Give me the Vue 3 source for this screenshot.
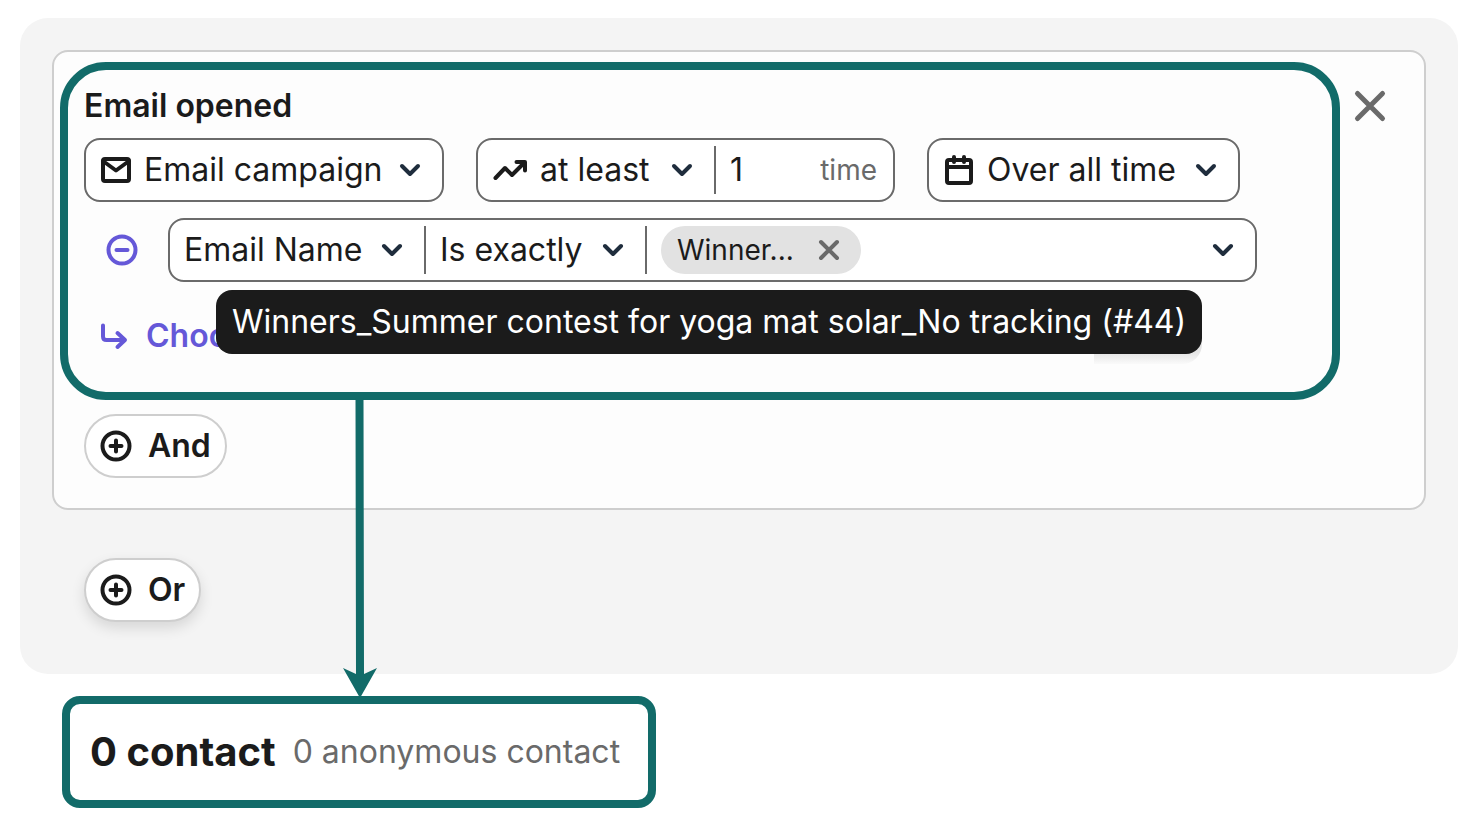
<script setup>
import { ref } from 'vue'

const source = ref('Email campaign')
const operator = ref('at least')
const count = ref('1')
const period = ref('Over all time')
const field = ref('Email Name')
const match = ref('Is exactly')
</script>

<template>
  <main class="page">
    <section class="panel">
      <div class="card">
        <div class="card-top">
          <div class="condition">
            <h2 class="title">Email opened</h2>

            <div class="row">
              <label class="box source">
                <svg class="icon" viewBox="0 0 32 32" aria-hidden="true">
                  <rect x="3" y="5" width="26" height="22" rx="2" />
                  <path d="M3 7l13 9.500 13-9.500" />
                </svg>
                <span class="picker">
                  <select v-model="source" aria-label="Source"><option>Email campaign</option></select>
                  <svg class="chevron" viewBox="0 0 20 20" aria-hidden="true"><path d="M2 6l8 8 8-8" /></svg>
                </span>
              </label>

              <div class="box frequency">
                <label class="operator">
                  <svg class="icon wide" viewBox="0 0 36 32" aria-hidden="true">
                    <path d="M3.500 24l9.500-10 7 7L32.500 8.500M24.500 8h8.500v8.500" />
                  </svg>
                  <span class="picker">
                    <select v-model="operator" aria-label="Operator"><option>at least</option></select>
                    <svg class="chevron" viewBox="0 0 20 20" aria-hidden="true"><path d="M2 6l8 8 8-8" /></svg>
                  </span>
                </label>
                <label class="count">
                  <input v-model="count" type="text" inputmode="numeric" />
                  <span class="unit">time</span>
                </label>
              </div>

              <label class="box period">
                <svg class="icon" viewBox="0 0 32 32" aria-hidden="true">
                  <rect x="4" y="6" width="24" height="23" rx="2" />
                  <path d="M4 13h24" />
                  <path d="M11 3v5M21 3v5" />
                </svg>
                <span class="picker">
                  <select v-model="period" aria-label="Period"><option>Over all time</option></select>
                  <svg class="chevron" viewBox="0 0 20 20" aria-hidden="true"><path d="M2 6l8 8 8-8" /></svg>
                </span>
              </label>
            </div>

            <div class="row filter-row">
              <button class="icon-button remove" type="button" aria-label="Remove filter">
                <svg class="icon" viewBox="0 0 32 32" aria-hidden="true">
                  <circle cx="16" cy="16" r="13.500" />
                  <path d="M10.500 16h11" />
                </svg>
              </button>
              <div class="box filter">
                <label class="picker field">
                  <select v-model="field" aria-label="Field"><option>Email Name</option></select>
                  <svg class="chevron" viewBox="0 0 20 20" aria-hidden="true"><path d="M2 6l8 8 8-8" /></svg>
                </label>
                <label class="picker match">
                  <select v-model="match" aria-label="Match type"><option>Is exactly</option></select>
                  <svg class="chevron" viewBox="0 0 20 20" aria-hidden="true"><path d="M2 6l8 8 8-8" /></svg>
                </label>
                <div class="values">
                  <span class="chip" aria-describedby="value-tip">
                    Winner...
                    <button class="icon-button" type="button" aria-label="Remove value">
                      <svg class="cross" viewBox="0 0 24 24" aria-hidden="true"><path d="M4 4l16 16M20 4L4 20" /></svg>
                    </button>
                  </span>
                  <button class="icon-button" type="button" aria-label="Show values">
                    <svg class="chevron" viewBox="0 0 20 20" aria-hidden="true"><path d="M2 6l8 8 8-8" /></svg>
                  </button>
                </div>
                <div id="value-tip" class="tooltip" role="tooltip">
                  Winners_Summer contest for yoga mat solar_No tracking (#44)
                </div>
              </div>
            </div>

            <button class="choose" type="button">
              <svg class="icon" viewBox="0 0 32 32" aria-hidden="true">
                <path d="M5 5.500v11q0 3.500 3.500 3.500h18M19.500 13l7.500 7-7.500 7" />
              </svg>
              Choo
            </button>
          </div>

          <button class="icon-button close" type="button" aria-label="Remove condition">
            <svg viewBox="0 0 32 32" aria-hidden="true"><path d="M3.500 3.500l25 25M28.500 3.500l-25 25" /></svg>
          </button>
        </div>

        <button class="pill" type="button">
          <svg class="icon" viewBox="0 0 32 32" aria-hidden="true">
            <circle cx="16" cy="16" r="13.500" />
            <path d="M10.500 16h11M16 10.500v11" />
          </svg>
          And
        </button>
      </div>

      <button class="pill raised" type="button">
        <svg class="icon" viewBox="0 0 32 32" aria-hidden="true">
          <circle cx="16" cy="16" r="13.500" />
          <path d="M10.500 16h11M16 10.500v11" />
        </svg>
        Or
      </button>
    </section>

    <section class="result">
      <svg class="arrow" viewBox="0 0 34 300" aria-hidden="true">
        <path d="M12.500 0h8L21 276l13-6-17 30L0 270l13 6z" />
      </svg>
      <strong>0 contact</strong>
      <span>0 anonymous contact</span>
    </section>
  </main>
</template>

<style>
body {
  margin: 0;
  background: #fff;
}
</style>

<style scoped>
.page {
  padding: 18px 16px 18px 20px;
  font-family: Inter, "Liberation Sans", sans-serif;
  font-size: 32px;
  line-height: 40px;
  color: #1b1b1b;
}

.page *,
.page *::after {
  box-sizing: border-box;
}

.panel {
  padding: 32px 32px 52px;
  border-radius: 28px;
  background: #f4f4f4;
}

.card {
  padding: 10px 38px 30px 6px;
  border: 2px solid #cecece;
  border-radius: 16px;
  background: #fdfdfd;
}

.card-top {
  display: flex;
  align-items: flex-start;
  gap: 14px;
}

.condition {
  flex: 1;
  min-width: 0;
  padding: 16px 16px 36px;
  border: 8px solid #126b69;
  border-radius: 46px;
}

.title {
  margin: 0 0 12px;
  font-size: 32px;
  line-height: 40px;
  font-weight: 600;
}

.row {
  display: flex;
  align-items: center;
  gap: 32px;
}

.filter-row {
  gap: 30px;
  margin-top: 16px;
  padding-left: 22px;
}

.box {
  display: flex;
  align-items: center;
  height: 64px;
  border: 2px solid #6a6a6a;
  border-radius: 16px;
  background: #fff;
}

.source,
.period {
  gap: 12px;
  padding: 0 22px 0 14px;
}

.source { width: 360px; }
.frequency { width: 419px; }
.period { width: 313px; }

.operator {
  display: flex;
  align-items: center;
  gap: 12px;
  width: 238px;
  height: 48px;
  padding: 0 22px 0 14px;
  border-right: 2px solid #6a6a6a;
}

.picker {
  display: grid;
  flex: 1;
  align-items: center;
  min-width: 0;
}

.picker > * {
  grid-area: 1 / 1;
}

.picker > .chevron {
  justify-self: end;
  pointer-events: none;
}

select,
input,
button {
  margin: 0;
  padding: 0;
  border: 0;
  outline: 0;
  background: none;
  color: inherit;
  font: inherit;
}

select {
  appearance: none;
  width: 100%;
  height: 48px;
}

svg {
  flex: none;
  display: block;
  overflow: visible;
  fill: none;
  stroke: currentColor;
  stroke-width: 4;
  stroke-linecap: round;
  stroke-linejoin: round;
}

.icon {
  width: 32px;
  height: 32px;
}

.wide {
  width: 36px;
}

.chevron {
  width: 20px;
  height: 20px;
  color: #1f2d3d;
}

.count {
  display: flex;
  flex: 1;
  align-items: center;
  min-width: 0;
  padding: 0 16px 0 14px;
}

.count input {
  flex: 1;
  width: 0;
  min-width: 0;
}

.unit {
  font-size: 28px;
  color: #6a6a6a;
}

.filter {
  position: relative;
  z-index: 1;
  flex: 1;
  max-width: 1089px;
}

.remove {
  color: #6558d8;
}

.field,
.match {
  flex: none;
  height: 48px;
  padding: 0 22px 0 14px;
  border-right: 2px solid #6a6a6a;
}

.field { width: 256px; }
.match { width: 221px; }

.values {
  display: flex;
  flex: 1;
  align-items: center;
  justify-content: space-between;
  padding: 0 22px 0 14px;
}

.chip {
  display: flex;
  align-items: center;
  justify-content: space-between;
  width: 200px;
  height: 48px;
  padding: 0 20px 0 16px;
  border-radius: 24px;
  background: #e2e2e2;
  font-size: 28px;
}

.icon-button {
  flex: none;
  cursor: pointer;
}

.cross {
  width: 24px;
  height: 24px;
  color: #6a6a6a;
}

.tooltip {
  position: absolute;
  top: 70px;
  left: 46px;
  height: 64px;
  padding: 12px 16px;
  border-radius: 16px;
  background: #1b1b1b;
  color: #fff;
  white-space: nowrap;
}

.tooltip::after {
  content: "";
  position: absolute;
  z-index: -1;
  right: 0;
  bottom: -10px;
  width: 108px;
  height: 30px;
  border-radius: 0 0 20px 0;
  background: linear-gradient(#e4e4e4 60%, #fafafa);
}

.choose {
  display: flex;
  align-items: center;
  gap: 16px;
  margin-top: 34px;
  padding-left: 14px;
  color: #6558d8;
  font-weight: 600;
}

.close {
  margin-top: 28px;
  color: #6a6a6a;
}

.close svg {
  width: 32px;
  height: 32px;
  stroke-width: 5;
}

.pill {
  display: flex;
  align-items: center;
  gap: 16px;
  height: 64px;
  margin: 14px 0 0 24px;
  padding: 0 14px;
  border: 2px solid #cecece;
  border-radius: 32px;
  background: #fff;
  font-weight: 600;
  cursor: pointer;
}

.raised {
  margin: 48px 0 0 32px;
  box-shadow: 0 6px 14px rgba(0, 0, 0, 0.12);
}

.result {
  position: relative;
  display: flex;
  align-items: center;
  gap: 17px;
  width: fit-content;
  height: 112px;
  margin: 22px 0 0 42px;
  padding: 0 28px 0 20px;
  border: 8px solid #126b69;
  border-radius: 18px;
  background: #fff;
}

.result strong {
  font-size: 40px;
  font-weight: 700;
}

.result span {
  color: #6a6a6a;
}

.arrow {
  position: absolute;
  left: 273px;
  bottom: 102px;
  width: 34px;
  height: 300px;
  fill: #126b69;
  stroke: none;
}
</style>
